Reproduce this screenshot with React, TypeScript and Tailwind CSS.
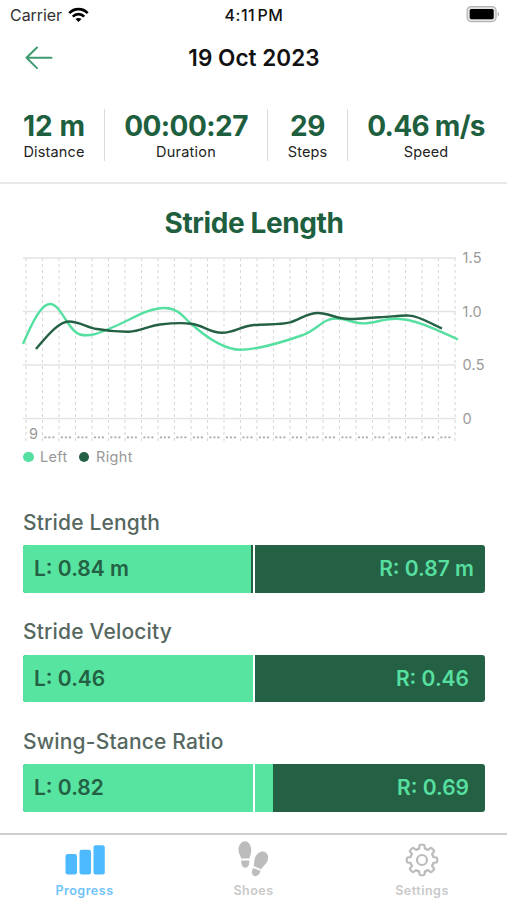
const STATS = [
  { value: '12 m', label: 'Distance', box: 'w-[100px] pl-[4px]', tracking: 'tracking-[0px]', labelTracking: 'tracking-[0.15px]' },
  { value: '00:00:27', label: 'Duration', box: 'w-[162px]', tracking: 'tracking-[-0.55px]', labelTracking: 'tracking-[0.25px]' },
  { value: '29', label: 'Steps', box: 'w-[79px]', tracking: 'tracking-[-0.3px]', labelTracking: 'tracking-[0.15px]' },
  { value: '0.46 m/s', label: 'Speed', box: 'w-[156px]', tracking: 'tracking-[-0.7px]', labelTracking: 'tracking-[0.1px]' },
];

const METRICS = [
  { title: 'Stride Length', left: 'L: 0.84 m', right: 'R: 0.87 m', split: 228, pad: 'pr-[11px]' },
  { title: 'Stride Velocity', left: 'L: 0.46', right: 'R: 0.46', split: 231, pad: 'pr-[16px]' },
  { title: 'Swing-Stance Ratio', left: 'L: 0.82', right: 'R: 0.69', split: 250, pad: 'pr-[16px]' },
];

const COLUMNS = Array.from({ length: 27 }, (_, i) => 26 + i * 16.5);
const SCALE = [
  { y: 8, label: '1.5' },
  { y: 61.5, label: '1.0' },
  { y: 115, label: '0.5' },
  { y: 168.5, label: '0' },
];

function StatusBar() {
  return (
    <div className="flex h-[30px] items-center justify-between pl-[10px] pr-[7px] text-[16px]">
      <div className="flex w-[150px] items-center gap-[6px] text-[#333]">
        <span className="tracking-[-0.05px]">Carrier</span>
        <svg width="21" height="16" viewBox="0 0 21 16" fill="none" stroke="#000" strokeWidth="2.7" className="-mt-px">
          <path d="M1.3 6.1C6.4.8 14.6.8 19.7 6.1" />
          <path d="M4.8 9.6c3.2-3.2 8.2-3.2 11.4 0" />
          <path d="M10.5 15.1 7.5 12.1c1.7-1.5 4.3-1.5 6 0Z" fill="#000" stroke="none" />
        </svg>
      </div>
      <span className="mr-[2px] font-medium tracking-[0.5px] text-[#111] [word-spacing:-2.5px]">4:11 PM</span>
      <div className="flex w-[150px] justify-end">
        <svg width="34" height="18" viewBox="0 0 34 18" className="-mt-[2px]">
          <rect x="1.1" y="1.6" width="29" height="15" rx="4" fill="#e2e2e2" stroke="#b5b5b5" strokeWidth="1.2" />
          <rect x="3.7" y="4" width="24" height="10.2" rx="1.6" fill="#000" />
          <path d="M31.7 7v4.4c2-.7 2-3.7 0-4.4Z" fill="#b5b5b5" />
        </svg>
      </div>
    </div>
  );
}

function Chart() {
  return (
    <div className="h-[194px]">
      <svg width="507" height="194" viewBox="0 0 507 194" fill="none">
        {SCALE.map((s) => (
          <g key={s.label}>
            <path d={`M23 ${s.y}H456`} stroke="#e4e4e4" strokeWidth="1.6" />
            <text x="462.5" y={s.y + 5.2} fontSize="14.5" fill="#9a9a9a" letterSpacing="0.2">{s.label}</text>
          </g>
        ))}
        {COLUMNS.map((x) => (
          <path key={x} d={`M${x} 8V193`} stroke="#d9d9d9" strokeWidth="1.1" strokeDasharray="3 3" />
        ))}
        <text x="29" y="188.500" fontSize="14.5" fill="#999">9</text>
        {COLUMNS.slice(1, 26).map((x) => (
          <path key={x} d={`M${x + 1.9} 187.4h10`} stroke="#a6a6a6" strokeWidth="1.8" strokeDasharray="2 2" />
        ))}
        <g strokeWidth="2.4" strokeLinejoin="round">
          <path
            stroke="#55dfa0"
            d="M23 94C32 73 41 54 50 54C61 54 68 81 80 84.500C93 88 106 79.500 118 75C132 69 148 57.800 165 58C180 58.500 184 69 196 78C208 88 226 99.700 240 99.700C260 99.700 286 91 303 85C318 79 323 68.500 336 68.500C347 68.500 352 73.400 364 73.400C375 73 384 68.500 397 68.800C416 69 439 81 458 89.500"
          />
          <path
            stroke="#246043"
            d="M36 99C48 85 59 71.500 69 71.500C79 71.500 87 77.500 97 79C108 81 118 81.900 129 81.800C140 81.500 148 76 160 74.500C171 73.200 182 72.600 191 73.700C203 75 210 82.800 222 82.800C234 82.800 241 76 254 75C267 74 280 75 290 72.400C300 69.500 307 63 318 63C329 63 336 69 350 69C362 69 371 67.300 380 67.200C390 67 400 65.200 409 65.600C420 66 431 74 442 78.500"
          />
        </g>
      </svg>
    </div>
  );
}

function Legend() {
  return (
    <div className="flex h-[26px] items-center pl-[23px] text-[14.5px] text-[#999]">
      <span className="size-[10.500px] rounded-full bg-[#55dfa0]" />
      <span className="ml-[6.500px] w-[28px] tracking-[0.3px]">Left</span>
      <span className="ml-[10.500px] size-[10.500px] rounded-full bg-[#246043]" />
      <span className="ml-[7px] tracking-[0.35px]">Right</span>
    </div>
  );
}

function ProgressIcon() {
  return (
    <svg width="40" height="30" viewBox="0 0 40 30" fill="#4dbaff">
      <rect x="0.500" y="9" width="11.500" height="20.500" rx="2.200" />
      <rect x="14.500" y="4.700" width="11.500" height="24.800" rx="2.200" />
      <rect x="28.500" y="0.300" width="11.300" height="29.200" rx="2.200" />
    </svg>
  );
}

function ShoesIcon() {
  return (
    <svg width="30" height="36" viewBox="0 0 30 36" fill="#bcbcbc" className="-ml-px -mt-[2px]">
      <path d="M7 .3C10.800.3 13.700 5 13.200 10.500c-.3 3-1.500 4.500-1.700 7H3.100C2.900 15 .7 13 .5 9.500.3 4.500 3.200.3 7 .3Z" />
      <path d="M3.200 19.600h8.100c.2 4.300-1.200 7.200-4 7.200s-4.100-3-4.100-7.200Z" />
      <g transform="translate(21.500 22) rotate(22)">
        <path d="M.8-12.200C4.500-12 7-8 6.600-3.500 6.300-.3 4.200 1.500 4 5h-8.300C-4.400 2.500-6 .5-6.100-3-6.200-8-3-12.300.8-12.200Z" />
        <path d="M-4.200 7H4c.1 4.200-1.300 7-4.100 7s-4.200-2.800-4.100-7Z" />
      </g>
    </svg>
  );
}

const TOOTH_ANGLES = [0, 45, 90, 135, 180, 225, 270, 315];

/* Closed outline of an eight-toothed wheel with rounded tips and valleys. */
function gearOutline() {
  const at = (r: number, deg: number) => {
    const a = ((deg - 90) * Math.PI) / 180;
    return `${(18 + r * Math.cos(a)).toFixed(2)} ${(18 + r * Math.sin(a)).toFixed(2)}`;
  };
  const parts = TOOTH_ANGLES.map(
    (t) =>
      `L${at(13, t - 12)}Q${at(15.3, t - 11)} ${at(15.3, t - 5)}L${at(15.3, t + 5)}Q${at(15.3, t + 11)} ${at(13, t + 12)}Q${at(10.7, t + 14)} ${at(12, t + 22.5)}Q${at(10.7, t + 31)} ${at(13, t + 33)}`
  );
  return `M${at(13, -12)}${parts.join('')}Z`;
}

function GearIcon() {
  return (
    <svg width="36" height="36" viewBox="0 0 36 36" fill="none" stroke="#bcbcbc" strokeWidth="2.200" strokeLinejoin="round" className="-mt-px">
      <path d={gearOutline()} />
      <circle cx="18" cy="18" r="5" />
    </svg>
  );
}

const TABS = [
  { label: 'Progress', icon: <ProgressIcon />, color: 'text-[#6fc3fb]', nudge: '' },
  { label: 'Shoes', icon: <ShoesIcon />, color: 'text-[#c9c9c9]', nudge: '' },
  { label: 'Settings', icon: <GearIcon />, color: 'text-[#c9c9c9]', nudge: 'pr-px' },
];

export default function App() {
  return (
    <div className="flex h-[900px] w-[507px] flex-col overflow-hidden whitespace-nowrap bg-white font-['Inter','Liberation_Sans',sans-serif]">
      <StatusBar />
      <header className="flex h-[56px] items-center justify-between px-[25px]">
        <svg width="28" height="24" viewBox="0 0 28 24" fill="none" stroke="#3f9a72" strokeWidth="2" strokeLinecap="round" strokeLinejoin="round">
          <path d="M12 1.500 1.500 11.800 12 22.100M1.500 11.800H26.500" />
        </svg>
        <h1 className="pl-px text-[22.5px] font-semibold tracking-[0.05px] text-[#111]">19 Oct 2023</h1>
        <span className="w-[28px]" />
      </header>
      <section className="flex h-[98px] border-b-2 border-[#e8e8e8] pt-[23px]">
        {STATS.map((s, i) => (
          <div key={s.label} className={`box-content flex h-[52px] flex-col items-center ${s.box} ${i < 3 ? 'border-r border-[#dcdcdc]' : ''}`}>
            <span className={`mt-[1px] text-[28px] font-bold leading-[32px] text-[#1e5f40] ${s.tracking}`}>{s.value}</span>
            <span className={`text-[14.5px] leading-[20px] text-[#222] ${s.labelTracking}`}>{s.label}</span>
          </div>
        ))}
      </section>
      <h2 className="flex h-[66px] items-center justify-center pl-px pt-[11px] text-[28px] font-bold tracking-[-0.4px] text-[#1e5f40]">Stride Length</h2>
      <Chart />
      <Legend />
      <main className="flex flex-1 flex-col gap-[16px] px-[23px] pt-[29px]">
        {METRICS.map((m) => (
          <section key={m.title}>
            <h3 className="flex h-[46px] items-center pb-[6px] pt-[7px] text-[21px] font-medium tracking-[0.17px] text-[#56685f]">{m.title}</h3>
            <div className="relative flex h-[47.500px] w-[462px] items-center justify-between overflow-hidden rounded-[3px] bg-[#246043] text-[21px] font-semibold">
              <span className="absolute inset-y-0 left-0 bg-[#57e4a1]" style={{ width: m.split }} />
              <span className="absolute inset-y-0 left-[230px] w-[2px] bg-white" />
              <span className="relative pl-[11px] text-[#246043]">{m.left}</span>
              <span className={`relative text-[#57dfa0] ${m.pad}`}>{m.right}</span>
            </div>
          </section>
        ))}
      </main>
      <nav className="grid h-[67px] grid-cols-3 border-t-2 border-[#cecece]">
        {TABS.map((t) => (
          <div key={t.label} className={`flex flex-col items-center pt-[6px] ${t.color} ${t.nudge}`}>
            <span className="flex h-[38px] items-center">{t.icon}</span>
            <span className="mt-[3px] text-[12.5px] font-semibold leading-[18px] tracking-[0.5px]">{t.label}</span>
          </div>
        ))}
      </nav>
    </div>
  );
}
